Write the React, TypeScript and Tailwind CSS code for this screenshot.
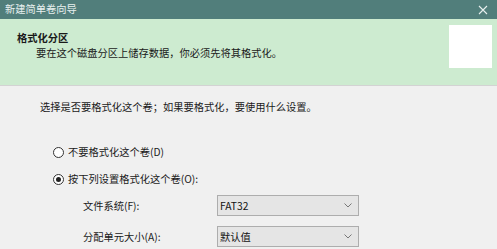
import React from "react";

const font = { fontFamily: '"Microsoft YaHei", "Noto Sans CJK SC", "Noto Sans", sans-serif' };

function Radio({ checked }: { checked?: boolean }) {
  return (
    <span className="flex h-[11px] w-[11px] items-center justify-center rounded-full border border-[#333] bg-white">
      {checked && <span className="h-[5px] w-[5px] rounded-full bg-[#222]" />}
    </span>
  );
}

function Select({ value }: { value: string }) {
  return (
    <div className="flex h-[21px] w-[142px] items-center justify-between border border-[#adadad] bg-[#e5e5e5] pl-[2px] pr-[6px] text-[#111]">
      <span>{value}</span>
      <svg width="8" height="5" viewBox="0 0 8 5" fill="none">
        <path d="M0.5 0.5 L4 4 L7.5 0.5" stroke="#777" strokeWidth="1" />
      </svg>
    </div>
  );
}

export default function App() {
  return (
    <div className="h-[249px] w-[497px] overflow-hidden bg-[#f0f0f0] text-[10.25px] text-[#1a1a1a]" style={font}>
      {/* 标题栏 */}
      <div className="flex h-[19px] items-center justify-between bg-[#517e7b] pl-[5px] pr-[9px] text-[#e8f0ef]">
        <span className="leading-none">新建简单卷向导</span>
        <svg width="10" height="10" viewBox="0 0 10 10">
          <path d="M1 1 L9 9 M9 1 L1 9" stroke="#e8f0ef" strokeWidth="1.1" />
        </svg>
      </div>

      {/* 页眉 */}
      <div className="flex h-[67px] items-start justify-between border-b border-[#d3d3d3] bg-[#cdebd0] pl-[17px] pr-[5px]">
        <div className="pt-[11px]">
          <p className="h-[15px] font-bold leading-[15px]">格式化分区</p>
          <p className="h-[15px] pl-[19px] leading-[15px]">要在这个磁盘分区上储存数据，你必须先将其格式化。</p>
        </div>
        <div className="mt-[6px] h-[43px] w-[43px] bg-white" />
      </div>

      {/* 内容 */}
      <div className="pl-[40px] pt-[14px]">
        <p className="h-[14px] leading-[14px]">选择是否要格式化这个卷；如果要格式化，要使用什么设置。</p>

        <div className="mt-[31px] flex h-[14px] items-center gap-[4px] pl-[13px]">
          <Radio />
          <span>不要格式化这个卷(D)</span>
        </div>
        <div className="mt-[13px] flex h-[14px] items-center gap-[4px] pl-[13px]">
          <Radio checked />
          <span>按下列设置格式化这个卷(O):</span>
        </div>

        <div className="mt-[9px] flex h-[21px] items-center">
          <span className="w-[177px] pl-[43px]">文件系统(F):</span>
          <Select value="FAT32" />
        </div>
        <div className="mt-[10px] flex h-[21px] items-center">
          <span className="w-[177px] pl-[43px]">分配单元大小(A):</span>
          <Select value="默认值" />
        </div>
      </div>
    </div>
  );
}
